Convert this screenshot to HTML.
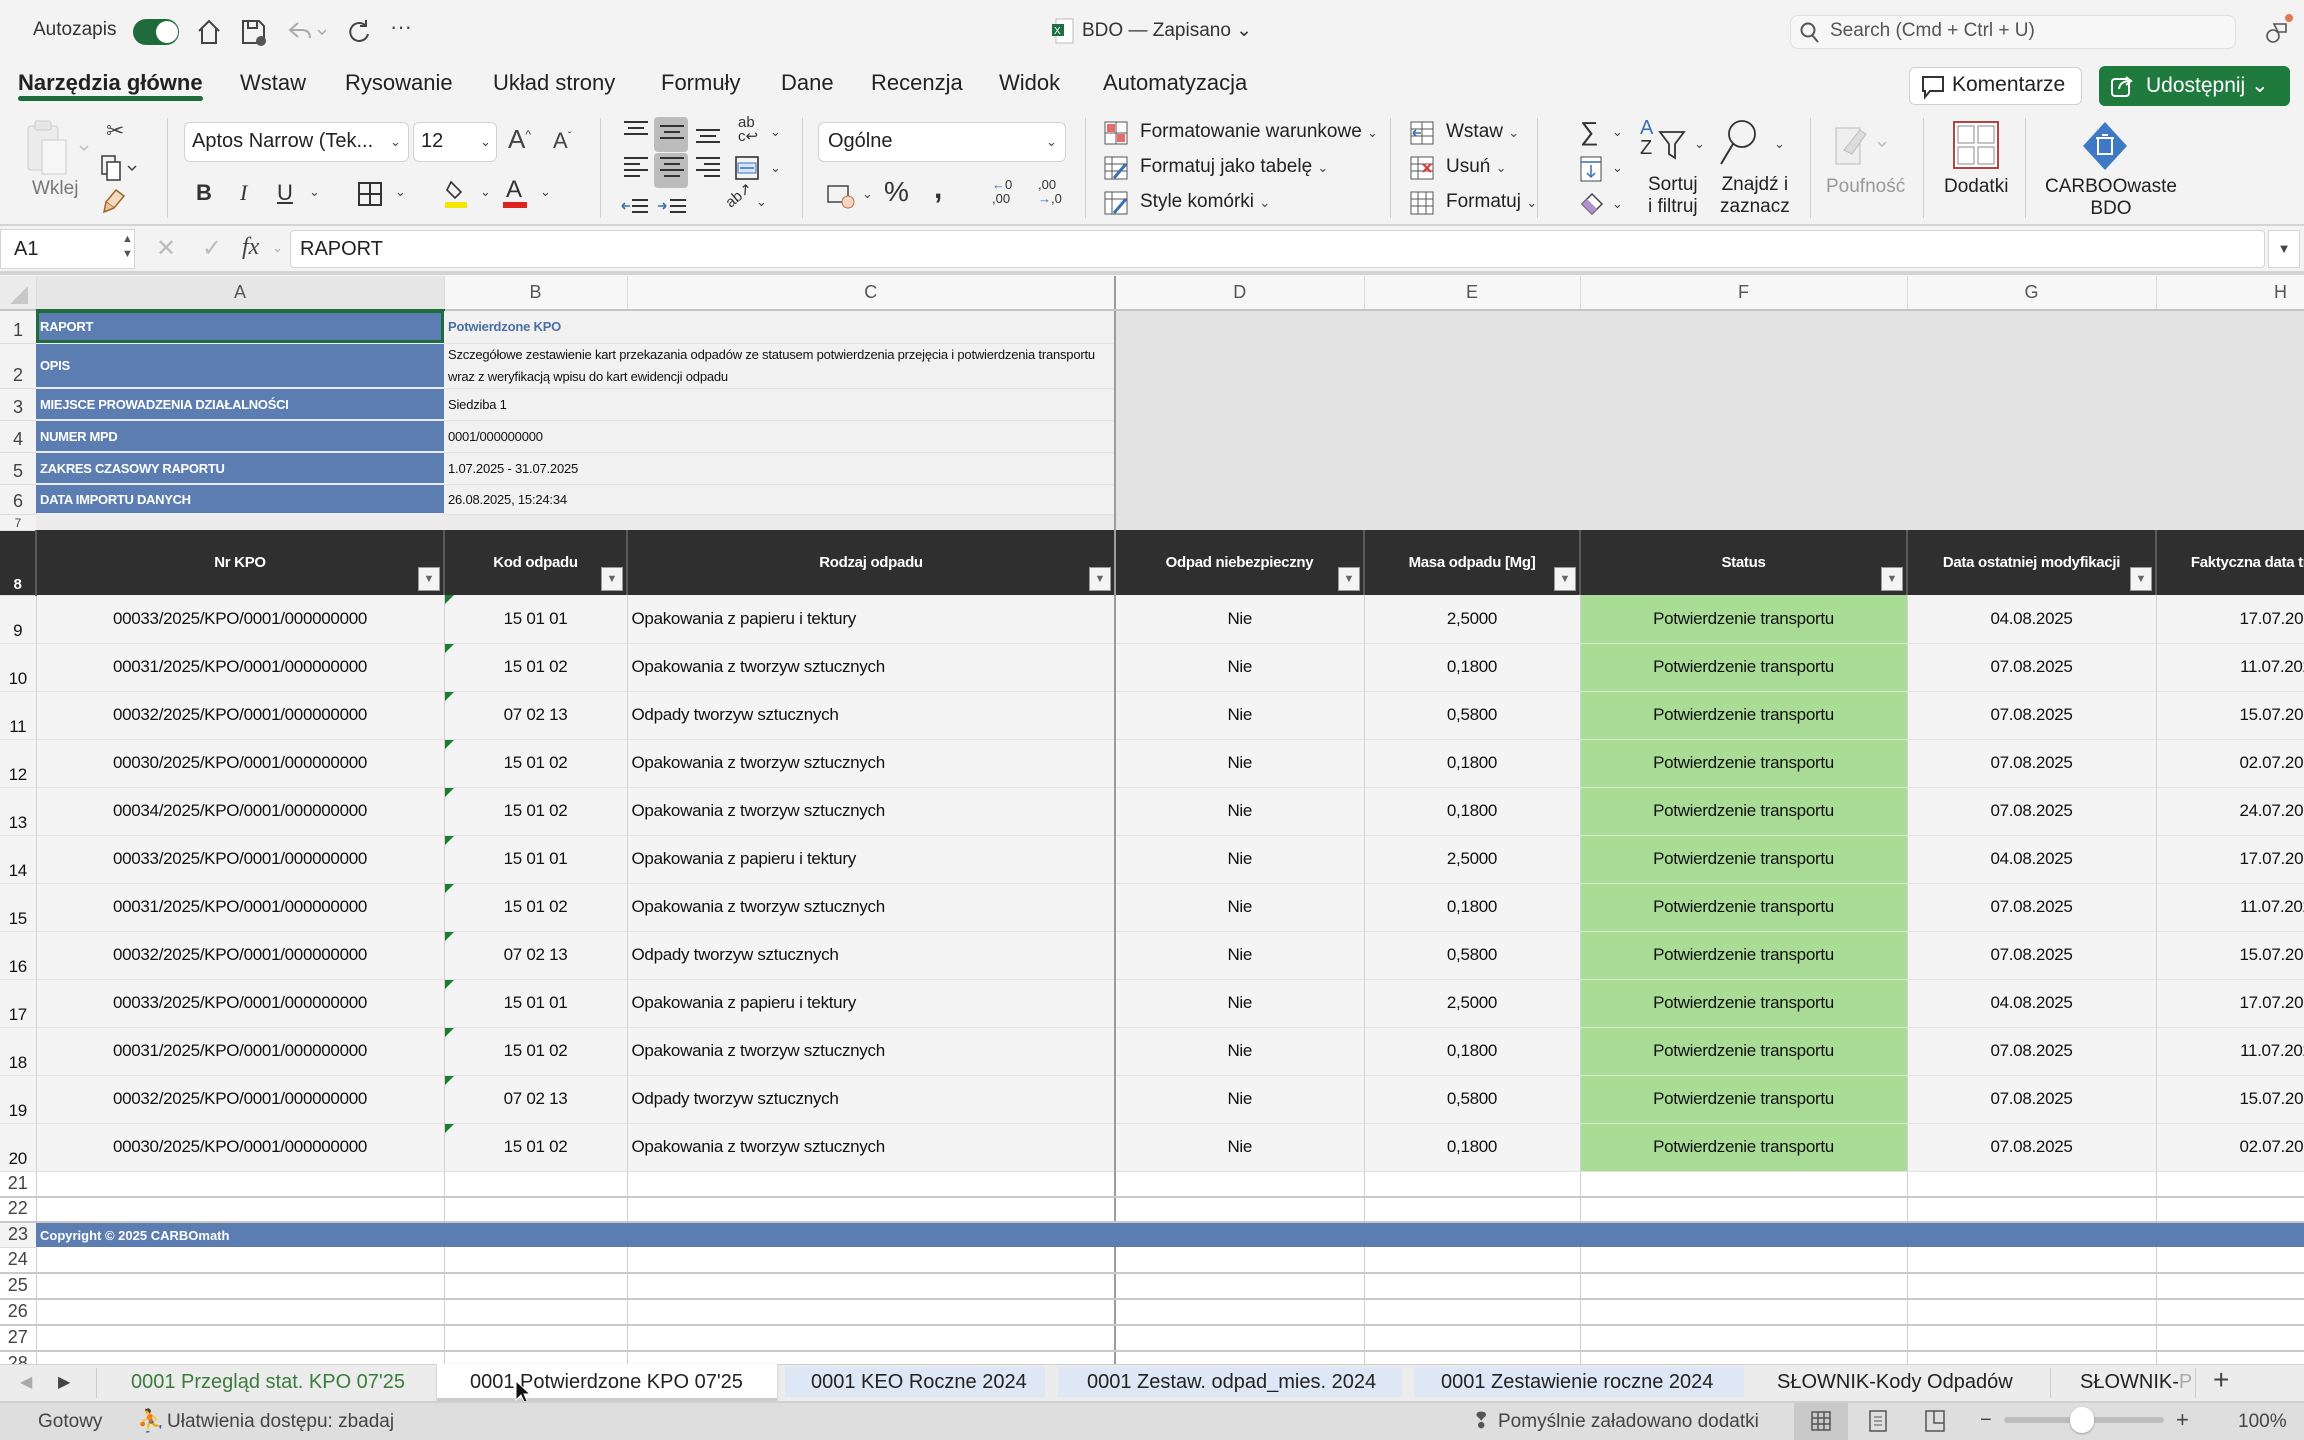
<!DOCTYPE html>
<html><head><meta charset="utf-8">
<style>
*{box-sizing:border-box;margin:0;padding:0}
body{width:2304px;height:1440px;overflow:hidden;background:#f3f3f3;font-family:"Liberation Sans",sans-serif;color:#222;position:relative}
.a{position:absolute;white-space:nowrap}
.t{font-size:22px;color:#222}
.r{font-size:19px;color:#222}
.sep{position:absolute;width:1px;background:#d0d0d0;top:118px;height:100px}
.chev{font-size:13px;color:#444}
svg{position:absolute}
table{position:absolute;left:0;top:276px;width:2405px;border-collapse:collapse;table-layout:fixed;font-family:"Liberation Sans Narrow","Liberation Sans",sans-serif}
td{overflow:hidden;white-space:nowrap;padding:0 4px;position:relative}
td.rh{background:#f3f3f3;color:#444;font-size:18px;text-align:center;vertical-align:bottom;padding:0 0 2px 0;font-family:"Liberation Sans",sans-serif;border-bottom:1px solid #dedede}
tr.ch td{background:#f7f7f7;color:#555;font-size:18px;text-align:center;font-family:"Liberation Sans",sans-serif;border-right:1px solid #dcdcdc;border-bottom:2px solid #c4c4c4}
td.lb{background:#5b7db1;color:#fff;font-weight:bold;font-size:13px;border-bottom:2px solid #e9eef5;letter-spacing:-0.3px}
td.gv{background:#f1f1f1;font-size:13px;color:#111;border-bottom:1px solid #e2e2e2;letter-spacing:-0.2px}
td.gr{background:#e3e3e3}
tr.h td{background:#2f2f2f;color:#fff;font-weight:bold;font-size:15px;text-align:center;border-right:2px solid #5a5a5a;letter-spacing:-0.3px}
.fb{position:absolute;right:3px;bottom:4px;width:22px;height:24px;background:#f4f4f4;border:1px solid #999;color:#666;font-size:11px;line-height:22px;text-align:center;letter-spacing:0}
tr.d td{background:#f4f4f4;font-size:17px;color:#111;text-align:center;border-bottom:1px solid #e1e1e1;border-right:1px solid #d2d2d2;letter-spacing:-0.3px}
tr.d td.l{text-align:left}
tr.d td.g{background:#a9dc95}
tr.d td.tri::before{content:"";position:absolute;left:0;top:0;border-top:9px solid #1f7a35;border-right:9px solid transparent}
tr.e td{background:#fff;border-right:1px solid #cfcfcf;border-bottom:2px solid #c9c9c9}
.cd{border-right:2px solid #9c9c9c !important}
</style></head><body>

<!-- title bar -->
<div class="a r" style="left:33px;top:19px;color:#333">Autozapis</div>
<div class="a" style="left:133px;top:19px;width:46px;height:26px;border-radius:13px;background:#1f6b3b"></div>
<div class="a" style="left:156px;top:21px;width:22px;height:22px;border-radius:11px;background:#fff"></div>
<svg style="left:196px;top:18px" width="26" height="28" viewBox="0 0 26 28"><path d="M3 13 L13 3 L23 13 M6 10 V25 H20 V10" fill="none" stroke="#444" stroke-width="2"/></svg>
<svg style="left:240px;top:18px" width="28" height="30" viewBox="0 0 28 30"><path d="M3 3 H19 L24 8 V25 H3 Z M8 3 V10 H17 V3" fill="none" stroke="#444" stroke-width="2"/><circle cx="21" cy="23" r="5" fill="#555"/></svg>
<svg style="left:286px;top:20px" width="40" height="26" viewBox="0 0 40 26"><path d="M12 3 L4 10 L12 17 M4 10 H16 Q24 10 24 18" fill="none" stroke="#aaa" stroke-width="2"/><path d="M32 10 L36 14 L40 10" fill="none" stroke="#aaa" stroke-width="1.5"/></svg>
<svg style="left:346px;top:18px" width="26" height="28" viewBox="0 0 26 28"><path d="M20 8 A9 9 0 1 0 22 16 M20 2 V8 H14" fill="none" stroke="#444" stroke-width="2"/></svg>
<div class="a" style="left:390px;top:14px;font-size:22px;color:#444">···</div>
<svg style="left:1052px;top:18px" width="22" height="26" viewBox="0 0 22 26"><rect x="4" y="1" width="17" height="24" fill="#fff" stroke="#bbb"/><rect x="0" y="6" width="12" height="12" fill="#1e7145"/><text x="2" y="16" font-size="10" fill="#fff" font-family="Liberation Sans">X</text></svg>
<div class="a r" style="left:1082px;top:19px;color:#333">BDO — Zapisano ⌄</div>
<div class="a" style="left:1790px;top:15px;width:446px;height:34px;border:1px solid #e0e0e0;border-radius:8px;background:#f7f7f7"></div>
<svg style="left:1800px;top:22px" width="20" height="22" viewBox="0 0 20 22"><circle cx="8" cy="8" r="6.5" fill="none" stroke="#555" stroke-width="2"/><path d="M12 13 L18 20" stroke="#555" stroke-width="2"/></svg>
<div class="a r" style="left:1830px;top:20px;color:#555">Search (Cmd + Ctrl + U)</div>
<svg style="left:2260px;top:14px" width="34" height="34" viewBox="0 0 34 34"><circle cx="13" cy="22" r="6" fill="none" stroke="#555" stroke-width="1.6"/><path d="M14 10 h12 v8 h-8z" fill="none" stroke="#555" stroke-width="1.6"/><circle cx="29" cy="4" r="4" fill="#e07a50"/></svg>

<!-- tabs -->
<div class="a t" style="left:18px;top:70px;font-weight:bold">Narzędzia główne</div>
<div class="a" style="left:18px;top:96px;width:185px;height:5px;border-radius:3px;background:#1f6b3b"></div>
<div class="a t" style="left:240px;top:70px">Wstaw</div>
<div class="a t" style="left:345px;top:70px">Rysowanie</div>
<div class="a t" style="left:493px;top:70px">Układ strony</div>
<div class="a t" style="left:661px;top:70px">Formuły</div>
<div class="a t" style="left:781px;top:70px">Dane</div>
<div class="a t" style="left:871px;top:70px">Recenzja</div>
<div class="a t" style="left:999px;top:70px">Widok</div>
<div class="a t" style="left:1103px;top:70px">Automatyzacja</div>
<div class="a" style="left:1909px;top:67px;width:173px;height:38px;border:1px solid #d0d0d0;border-radius:6px;background:#fff"></div>
<svg style="left:1920px;top:74px" width="26" height="26" viewBox="0 0 26 26"><path d="M3 3 H23 V17 H10 L5 23 V17 H3 Z" fill="none" stroke="#333" stroke-width="2"/></svg>
<div class="a t" style="left:1952px;top:73px;font-size:21px">Komentarze</div>
<div class="a" style="left:2099px;top:66px;width:191px;height:40px;border-radius:6px;background:#1f7a3e"></div>
<svg style="left:2110px;top:73px" width="26" height="26" viewBox="0 0 26 26"><rect x="2" y="6" width="17" height="17" rx="3" fill="none" stroke="#fff" stroke-width="2"/><path d="M9 16 Q10 8 20 8 M16 4 L21 8 L16 12" fill="none" stroke="#fff" stroke-width="2"/></svg>
<div class="a t" style="left:2146px;top:73px;color:#fff;font-size:21px">Udostępnij ⌄</div>

<!-- ribbon -->
<svg style="left:22px;top:118px" width="70" height="60" viewBox="0 0 70 60"><rect x="6" y="8" width="30" height="44" rx="3" fill="#ececec" stroke="#ccc"/><rect x="13" y="3" width="16" height="9" rx="2" fill="#e6e6e6" stroke="#ccc"/><rect x="20" y="22" width="24" height="34" fill="#f6f6f6" stroke="#ccc"/><path d="M58 28 l4 4 l4 -4" fill="none" stroke="#bbb" stroke-width="1.5"/></svg>
<div class="a r" style="left:32px;top:178px;color:#777">Wklej</div>
<div class="a" style="left:106px;top:118px;font-size:22px;color:#444">✂</div>
<svg style="left:100px;top:154px" width="40" height="30" viewBox="0 0 40 30"><rect x="2" y="2" width="13" height="18" fill="none" stroke="#444" stroke-width="1.6"/><rect x="7" y="8" width="13" height="18" fill="#fff" stroke="#444" stroke-width="1.6"/><path d="M28 12 l4 4 l4 -4" fill="none" stroke="#444" stroke-width="1.5"/></svg>
<svg style="left:102px;top:188px" width="24" height="26" viewBox="0 0 24 26"><path d="M14 2 L22 8 L12 20 L4 14 Z" fill="#f2dcc0" stroke="#a0662a" stroke-width="1.5"/><path d="M4 14 L2 24 L12 20" fill="#e8c89a" stroke="#a0662a" stroke-width="1.5"/></svg>
<div class="sep" style="left:167px"></div>
<div class="a" style="left:184px;top:122px;width:225px;height:40px;border:1px solid #d2d2d2;border-radius:6px;background:#fff"></div>
<div class="a r" style="left:192px;top:130px;font-size:20px">Aptos Narrow (Tek...</div>
<div class="a chev" style="left:390px;top:134px">⌄</div>
<div class="a" style="left:413px;top:122px;width:84px;height:40px;border:1px solid #d2d2d2;border-radius:6px;background:#fff"></div>
<div class="a r" style="left:421px;top:130px;font-size:20px">12</div>
<div class="a chev" style="left:480px;top:134px">⌄</div>
<div class="a" style="left:508px;top:124px;font-size:26px;color:#444">A<sup style="font-size:12px">^</sup></div>
<div class="a" style="left:553px;top:128px;font-size:22px;color:#444">A<sup style="font-size:11px">ˇ</sup></div>
<div class="a" style="left:196px;top:180px;font-size:22px;font-weight:bold;color:#333">B</div>
<div class="a" style="left:240px;top:180px;font-size:22px;font-style:italic;color:#333;font-family:'Liberation Serif',serif">I</div>
<div class="a" style="left:277px;top:180px;font-size:22px;text-decoration:underline;color:#333">U</div>
<div class="a chev" style="left:309px;top:184px">⌄</div>
<svg style="left:357px;top:181px" width="26" height="26" viewBox="0 0 26 26"><rect x="2" y="2" width="22" height="22" fill="none" stroke="#333" stroke-width="2"/><path d="M13 2 V24 M2 13 H24" stroke="#333" stroke-width="2"/></svg>
<div class="a chev" style="left:395px;top:184px">⌄</div>
<svg style="left:443px;top:178px" width="26" height="32" viewBox="0 0 26 32"><path d="M8 4 L18 14 L12 20 L4 12 Z" fill="none" stroke="#333" stroke-width="1.6"/><rect x="2" y="24" width="22" height="6" fill="#f5e600"/></svg>
<div class="a chev" style="left:480px;top:184px">⌄</div>
<div class="a" style="left:506px;top:176px;font-size:24px;color:#333">A</div>
<div class="a" style="left:503px;top:202px;width:24px;height:6px;background:#d22"></div>
<div class="a chev" style="left:540px;top:184px">⌄</div>
<div class="sep" style="left:600px"></div>
<div class="a" style="left:654px;top:117px;width:34px;height:35px;border-radius:4px;background:#bcbcbc"></div>
<div class="a" style="left:654px;top:153px;width:34px;height:35px;border-radius:4px;background:#bcbcbc"></div>
<svg style="left:620px;top:118px" width="100" height="100" viewBox="0 0 100 100">
<g stroke="#333" stroke-width="2"><path d="M4 4h24M8 10h16M4 16h24"/><path d="M40 8h24M44 14h16M40 20h24"/><path d="M76 12h24M80 18h16M76 24h24"/>
<path d="M4 40h24M4 46h16M4 52h24M4 58h16"/><path d="M40 40h24M44 46h16M40 52h24M44 58h16"/><path d="M76 40h24M84 46h16M76 52h24M84 58h16"/>
<path d="M12 82h16M12 88h16M12 94h16"/><path d="M50 82h16M50 88h16M50 94h16"/></g>
<path d="M2 88h8M2 88l3 -3M2 88l3 3" stroke="#3a6fb0" stroke-width="1.6" fill="none"/><path d="M38 88h8M46 88l-3 -3M46 88l-3 3" stroke="#3a6fb0" stroke-width="1.6" fill="none"/></svg>
<div class="a" style="left:738px;top:116px;font-size:15px;color:#333;line-height:14px">ab<br>c↩</div>
<div class="a chev" style="left:770px;top:124px">⌄</div>
<svg style="left:734px;top:155px" width="26" height="26" viewBox="0 0 26 26"><rect x="2" y="2" width="22" height="22" fill="none" stroke="#333" stroke-width="1.6"/><rect x="4" y="8" width="18" height="10" fill="#d6e6f7" stroke="#3a6fb0"/><path d="M6 13h14" stroke="#3a6fb0" stroke-width="1.5"/></svg>
<div class="a chev" style="left:770px;top:160px">⌄</div>
<div class="a" style="left:724px;top:186px;font-size:15px;color:#333;transform:rotate(-40deg)">ab↗</div>
<div class="a chev" style="left:756px;top:194px">⌄</div>
<div class="sep" style="left:802px"></div>
<div class="a" style="left:818px;top:122px;width:248px;height:40px;border:1px solid #d2d2d2;border-radius:6px;background:#fff"></div>
<div class="a r" style="left:828px;top:130px;font-size:20px">Ogólne</div>
<div class="a chev" style="left:1046px;top:134px">⌄</div>
<svg style="left:826px;top:182px" width="30" height="28" viewBox="0 0 30 28"><rect x="2" y="4" width="20" height="16" fill="none" stroke="#444" stroke-width="1.5"/><ellipse cx="22" cy="20" rx="6" ry="6" fill="#f3d6c4" stroke="#c76b3a"/></svg>
<div class="a chev" style="left:862px;top:186px">⌄</div>
<div class="a" style="left:884px;top:176px;font-size:28px;color:#333">%</div>
<div class="a" style="left:934px;top:172px;font-size:30px;font-weight:bold;color:#333">,</div>
<div class="a" style="left:992px;top:178px;font-size:13px;line-height:14px;color:#333"><span style="color:#3a6fb0">←</span>0<br>,00</div>
<div class="a" style="left:1038px;top:178px;font-size:13px;line-height:14px;color:#333">,00<br><span style="color:#3a6fb0">→</span>,0</div>
<div class="sep" style="left:1085px"></div>
<svg style="left:1104px;top:121px" width="24" height="24" viewBox="0 0 24 24"><rect x="1" y="1" width="22" height="22" fill="#fff" stroke="#555"/><rect x="3" y="3" width="8" height="8" fill="#e46c6c"/><rect x="13" y="13" width="8" height="8" fill="#e46c6c"/><path d="M1 12h22M12 1v22" stroke="#555"/></svg>
<div class="a r" style="left:1140px;top:121px">Formatowanie warunkowe <span class="chev">⌄</span></div>
<svg style="left:1104px;top:156px" width="24" height="24" viewBox="0 0 24 24"><rect x="1" y="1" width="22" height="22" fill="#fff" stroke="#555"/><path d="M1 8h22M1 15h22M8 1v22" stroke="#555"/><path d="M10 22 L22 8" stroke="#3a6fb0" stroke-width="3"/></svg>
<div class="a r" style="left:1140px;top:156px">Formatuj jako tabelę <span class="chev">⌄</span></div>
<svg style="left:1104px;top:191px" width="24" height="24" viewBox="0 0 24 24"><rect x="1" y="1" width="22" height="22" fill="#fff" stroke="#555"/><path d="M1 8h22M8 1v22" stroke="#555"/><path d="M10 22 L22 8" stroke="#3a6fb0" stroke-width="3"/></svg>
<div class="a r" style="left:1140px;top:191px">Style komórki <span class="chev">⌄</span></div>
<div class="sep" style="left:1390px"></div>
<svg style="left:1410px;top:121px" width="24" height="24" viewBox="0 0 24 24"><rect x="1" y="1" width="22" height="22" fill="#fff" stroke="#555"/><path d="M1 8h22M1 15h22M12 1v22" stroke="#555"/><path d="M3 12h8M3 12l3-3M3 12l3 3" stroke="#3a6fb0" stroke-width="1.6"/></svg>
<div class="a r" style="left:1446px;top:121px">Wstaw <span class="chev">⌄</span></div>
<svg style="left:1410px;top:156px" width="24" height="24" viewBox="0 0 24 24"><rect x="1" y="1" width="22" height="22" fill="#fff" stroke="#555"/><path d="M1 8h22M1 15h22M8 1v22" stroke="#555"/><path d="M13 8l8 8M21 8l-8 8" stroke="#d33" stroke-width="2"/></svg>
<div class="a r" style="left:1446px;top:156px">Usuń <span class="chev">⌄</span></div>
<svg style="left:1410px;top:191px" width="24" height="24" viewBox="0 0 24 24"><rect x="1" y="1" width="22" height="22" fill="#fff" stroke="#555"/><path d="M1 8h22M1 15h22M8 1v22M16 1v22" stroke="#555"/></svg>
<div class="a r" style="left:1446px;top:191px">Formatuj <span class="chev">⌄</span></div>
<div class="sep" style="left:1537px"></div>
<div class="a" style="left:1580px;top:116px;font-size:26px;color:#333">∑</div>
<div class="a chev" style="left:1612px;top:124px">⌄</div>
<svg style="left:1580px;top:156px" width="22" height="26" viewBox="0 0 22 26"><rect x="1" y="1" width="20" height="24" fill="#fff" stroke="#444"/><path d="M1 6h20M11 9v12M7 17l4 4l4-4" stroke="#3a6fb0" stroke-width="1.5" fill="none"/></svg>
<div class="a chev" style="left:1612px;top:160px">⌄</div>
<svg style="left:1580px;top:192px" width="24" height="24" viewBox="0 0 24 24"><path d="M12 2 L22 12 L12 22 L2 12 Z" fill="#fff" stroke="#444" stroke-width="1.5"/><path d="M2 12 L7 7 L17 17 L12 22 Z" fill="#b48fd0"/></svg>
<div class="a chev" style="left:1612px;top:196px">⌄</div>
<div class="a" style="left:1640px;top:118px;font-size:20px;line-height:20px;color:#3a6fb0">A<br><span style="color:#333">Z</span></div>
<svg style="left:1658px;top:130px" width="28" height="30" viewBox="0 0 28 30"><path d="M2 2 H26 L17 14 V28 L11 24 V14 Z" fill="none" stroke="#333" stroke-width="1.8"/></svg>
<div class="a chev" style="left:1694px;top:136px">⌄</div>
<div class="a r" style="left:1648px;top:174px;line-height:22px;text-align:center">Sortuj<br>i filtruj</div>
<svg style="left:1718px;top:118px" width="40" height="50" viewBox="0 0 40 50"><circle cx="24" cy="16" r="13" fill="none" stroke="#333" stroke-width="1.8"/><path d="M15 26 L3 46" stroke="#333" stroke-width="2"/></svg>
<div class="a chev" style="left:1774px;top:136px">⌄</div>
<div class="a r" style="left:1720px;top:174px;line-height:22px;text-align:center">Znajdź i<br>zaznacz</div>
<div class="sep" style="left:1810px"></div>
<svg style="left:1834px;top:120px" width="60" height="50" viewBox="0 0 60 50"><rect x="2" y="8" width="24" height="36" fill="#eee" stroke="#bbb"/><path d="M10 30 L26 10 L32 14 L18 34 Z" fill="#ddd" stroke="#bbb"/><path d="M44 22l4 4l4-4" fill="none" stroke="#bbb" stroke-width="1.5"/></svg>
<div class="a r" style="left:1826px;top:176px;color:#999">Poufność</div>
<div class="sep" style="left:1923px"></div>
<svg style="left:1952px;top:120px" width="48" height="50" viewBox="0 0 48 50"><rect x="2" y="2" width="44" height="46" fill="#fff" stroke="#a33" stroke-width="1.8"/><rect x="6" y="6" width="16" height="17" fill="none" stroke="#888"/><rect x="26" y="6" width="16" height="17" fill="none" stroke="#888"/><rect x="6" y="27" width="16" height="17" fill="none" stroke="#888"/><rect x="26" y="27" width="16" height="17" fill="none" stroke="#888"/></svg>
<div class="a r" style="left:1944px;top:176px">Dodatki</div>
<div class="sep" style="left:2025px"></div>
<svg style="left:2080px;top:120px" width="50" height="52" viewBox="0 0 50 52"><path d="M25 2 L47 26 L25 50 L3 26 Z" fill="#3f78c4"/><rect x="18" y="18" width="14" height="16" fill="none" stroke="#fff" stroke-width="2"/><path d="M16 18h18M22 15h6" stroke="#fff" stroke-width="2"/></svg>
<div class="a r" style="left:2045px;top:176px;line-height:22px;text-align:center">CARBOOwaste<br>BDO</div>

<!-- formula bar -->
<div class="a" style="left:0;top:224px;width:2304px;height:2px;background:#d4d4d4"></div>
<div class="a" style="left:0;top:229px;width:135px;height:40px;background:#fff;border:1px solid #d4d4d4"></div>
<div class="a r" style="left:14px;top:238px;font-size:20px">A1</div>
<div class="a" style="left:122px;top:232px;font-size:11px;line-height:15px;color:#555">▲<br>▼</div>
<div class="a" style="left:156px;top:234px;font-size:24px;color:#bbb">✕</div>
<div class="a" style="left:202px;top:234px;font-size:24px;color:#bbb">✓</div>
<div class="a" style="left:242px;top:234px;font-size:24px;font-style:italic;color:#444;font-family:'Liberation Serif',serif">fx</div>
<div class="a chev" style="left:272px;top:240px;color:#aaa">⌄</div>
<div class="a" style="left:290px;top:230px;width:1975px;height:38px;background:#fff;border:1px solid #d4d4d4;border-radius:4px"></div>
<div class="a r" style="left:300px;top:238px;font-size:20px">RAPORT</div>
<div class="a" style="left:2268px;top:230px;width:32px;height:38px;background:#fff;border:1px solid #d4d4d4;font-size:13px;text-align:center;line-height:36px;color:#444">▼</div>
<div class="a" style="left:0;top:271px;width:2304px;height:4px;background:#d4d4d4"></div>

<table>
<colgroup><col style="width:36px"><col style="width:408px"><col style="width:183px"><col style="width:488px"><col style="width:249px"><col style="width:216px"><col style="width:327px"><col style="width:249px"><col style="width:249px"></colgroup>
<tr class="ch" style="height:34px"><td style="background:#ececec;padding:0"><svg style="left:8px;top:8px" width="22" height="22"><path d="M20 2 V20 H2 Z" fill="#c8c8c8"/></svg></td><td style="background:#e6e6e6;border-bottom:3px solid #1f6b3b">A</td><td>B</td><td class="cd">C</td><td>D</td><td>E</td><td>F</td><td>G</td><td>H</td></tr>
<tr style="height:33px"><td class="rh">1</td><td class="lb" style="outline:3px solid #1f6b3b;outline-offset:-3px">RAPORT</td><td class="gv" colspan="2" style="color:#4a6fa5;font-weight:bold;border-right:2px solid #9c9c9c">Potwierdzone KPO</td><td class="gr" colspan="5" rowspan="7"></td></tr>
<tr style="height:45px"><td class="rh">2</td><td class="lb">OPIS</td><td class="gv" colspan="2" style="white-space:normal;line-height:22px;border-right:2px solid #9c9c9c">Szczegółowe zestawienie kart przekazania odpadów ze statusem potwierdzenia przejęcia i potwierdzenia transportu wraz z weryfikacją wpisu do kart ewidencji odpadu</td></tr>
<tr style="height:32px"><td class="rh">3</td><td class="lb">MIEJSCE PROWADZENIA DZIAŁALNOŚCI</td><td class="gv" colspan="2" style="border-right:2px solid #9c9c9c">Siedziba 1</td></tr>
<tr style="height:32px"><td class="rh">4</td><td class="lb">NUMER MPD</td><td class="gv" colspan="2" style="border-right:2px solid #9c9c9c">0001/000000000</td></tr>
<tr style="height:32px"><td class="rh">5</td><td class="lb">ZAKRES CZASOWY RAPORTU</td><td class="gv" colspan="2" style="border-right:2px solid #9c9c9c">1.07.2025 - 31.07.2025</td></tr>
<tr style="height:30px"><td class="rh">6</td><td class="lb">DATA IMPORTU DANYCH</td><td class="gv" colspan="2" style="border-right:2px solid #9c9c9c">26.08.2025, 15:24:34</td></tr>
<tr style="height:16px"><td class="rh" style="font-size:12px;line-height:10px">7</td><td colspan="3" style="background:#ebebeb;border-right:2px solid #9c9c9c"></td></tr>
<tr class="h" style="height:65px"><td class="rh">8</td><td>Nr KPO<span class="fb">▼</span></td><td>Kod odpadu<span class="fb">▼</span></td><td class="cd">Rodzaj odpadu<span class="fb">▼</span></td><td>Odpad niebezpieczny<span class="fb">▼</span></td><td>Masa odpadu [Mg]<span class="fb">▼</span></td><td>Status<span class="fb">▼</span></td><td>Data ostatniej modyfikacji<span class="fb">▼</span></td><td>Faktyczna data transportu</td></tr>
<tr class="d" style="height:48px"><td class="rh">9</td><td>00033/2025/KPO/0001/000000000</td><td class="tri">15 01 01</td><td class="l cd">Opakowania z papieru i tektury</td><td>Nie</td><td>2,5000</td><td class="g">Potwierdzenie transportu</td><td>04.08.2025</td><td>17.07.2025</td></tr>
<tr class="d" style="height:48px"><td class="rh">10</td><td>00031/2025/KPO/0001/000000000</td><td class="tri">15 01 02</td><td class="l cd">Opakowania z tworzyw sztucznych</td><td>Nie</td><td>0,1800</td><td class="g">Potwierdzenie transportu</td><td>07.08.2025</td><td>11.07.2025</td></tr>
<tr class="d" style="height:48px"><td class="rh">11</td><td>00032/2025/KPO/0001/000000000</td><td class="tri">07 02 13</td><td class="l cd">Odpady tworzyw sztucznych</td><td>Nie</td><td>0,5800</td><td class="g">Potwierdzenie transportu</td><td>07.08.2025</td><td>15.07.2025</td></tr>
<tr class="d" style="height:48px"><td class="rh">12</td><td>00030/2025/KPO/0001/000000000</td><td class="tri">15 01 02</td><td class="l cd">Opakowania z tworzyw sztucznych</td><td>Nie</td><td>0,1800</td><td class="g">Potwierdzenie transportu</td><td>07.08.2025</td><td>02.07.2025</td></tr>
<tr class="d" style="height:48px"><td class="rh">13</td><td>00034/2025/KPO/0001/000000000</td><td class="tri">15 01 02</td><td class="l cd">Opakowania z tworzyw sztucznych</td><td>Nie</td><td>0,1800</td><td class="g">Potwierdzenie transportu</td><td>07.08.2025</td><td>24.07.2025</td></tr>
<tr class="d" style="height:48px"><td class="rh">14</td><td>00033/2025/KPO/0001/000000000</td><td class="tri">15 01 01</td><td class="l cd">Opakowania z papieru i tektury</td><td>Nie</td><td>2,5000</td><td class="g">Potwierdzenie transportu</td><td>04.08.2025</td><td>17.07.2025</td></tr>
<tr class="d" style="height:48px"><td class="rh">15</td><td>00031/2025/KPO/0001/000000000</td><td class="tri">15 01 02</td><td class="l cd">Opakowania z tworzyw sztucznych</td><td>Nie</td><td>0,1800</td><td class="g">Potwierdzenie transportu</td><td>07.08.2025</td><td>11.07.2025</td></tr>
<tr class="d" style="height:48px"><td class="rh">16</td><td>00032/2025/KPO/0001/000000000</td><td class="tri">07 02 13</td><td class="l cd">Odpady tworzyw sztucznych</td><td>Nie</td><td>0,5800</td><td class="g">Potwierdzenie transportu</td><td>07.08.2025</td><td>15.07.2025</td></tr>
<tr class="d" style="height:48px"><td class="rh">17</td><td>00033/2025/KPO/0001/000000000</td><td class="tri">15 01 01</td><td class="l cd">Opakowania z papieru i tektury</td><td>Nie</td><td>2,5000</td><td class="g">Potwierdzenie transportu</td><td>04.08.2025</td><td>17.07.2025</td></tr>
<tr class="d" style="height:48px"><td class="rh">18</td><td>00031/2025/KPO/0001/000000000</td><td class="tri">15 01 02</td><td class="l cd">Opakowania z tworzyw sztucznych</td><td>Nie</td><td>0,1800</td><td class="g">Potwierdzenie transportu</td><td>07.08.2025</td><td>11.07.2025</td></tr>
<tr class="d" style="height:48px"><td class="rh">19</td><td>00032/2025/KPO/0001/000000000</td><td class="tri">07 02 13</td><td class="l cd">Odpady tworzyw sztucznych</td><td>Nie</td><td>0,5800</td><td class="g">Potwierdzenie transportu</td><td>07.08.2025</td><td>15.07.2025</td></tr>
<tr class="d" style="height:48px"><td class="rh">20</td><td>00030/2025/KPO/0001/000000000</td><td class="tri">15 01 02</td><td class="l cd">Opakowania z tworzyw sztucznych</td><td>Nie</td><td>0,1800</td><td class="g">Potwierdzenie transportu</td><td>07.08.2025</td><td>02.07.2025</td></tr>
<tr class="e" style="height:26px"><td class="rh">21</td><td></td><td></td><td class="cd"></td><td></td><td></td><td></td><td></td><td></td></tr>
<tr class="e" style="height:25px"><td class="rh">22</td><td></td><td></td><td class="cd"></td><td></td><td></td><td></td><td></td><td></td></tr>
<tr style="height:25px"><td class="rh">23</td><td colspan="8" style="background:#5b7db1;color:#fff;font-size:13px;font-weight:bold">Copyright © 2025 CARBOmath</td></tr>
<tr class="e" style="height:26px"><td class="rh">24</td><td></td><td></td><td class="cd"></td><td></td><td></td><td></td><td></td><td></td></tr>
<tr class="e" style="height:26px"><td class="rh">25</td><td></td><td></td><td class="cd"></td><td></td><td></td><td></td><td></td><td></td></tr>
<tr class="e" style="height:26px"><td class="rh">26</td><td></td><td></td><td class="cd"></td><td></td><td></td><td></td><td></td><td></td></tr>
<tr class="e" style="height:26px"><td class="rh">27</td><td></td><td></td><td class="cd"></td><td></td><td></td><td></td><td></td><td></td></tr>
<tr class="e" style="height:26px"><td class="rh">28</td><td></td><td></td><td class="cd"></td><td></td><td></td><td></td><td></td><td></td></tr>
</table>

<!-- sheet tabs -->
<div class="a" style="left:0;top:1364px;width:2304px;height:38px;background:#ececec;border-top:1px solid #d0d0d0"></div>
<div class="a" style="left:20px;top:1372px;font-size:16px;color:#aaa">◀</div>
<div class="a" style="left:58px;top:1372px;font-size:16px;color:#444">▶</div>
<div class="a" style="left:96px;top:1368px;width:1px;height:30px;background:#ccc"></div>
<div class="a r" style="left:131px;top:1371px;color:#3a7d3a;font-size:20px">0001 Przegląd stat. KPO 07'25</div>
<div class="a" style="left:437px;top:1364px;width:340px;height:36px;background:#fff;border-bottom:2px solid #ccc;box-shadow:0 1px 2px #bbb"></div>
<div class="a r" style="left:470px;top:1371px;font-size:20px">0001 Potwierdzone KPO 07'25</div>
<div class="a" style="left:785px;top:1367px;width:260px;height:30px;background:#dde7f5"></div>
<div class="a r" style="left:811px;top:1371px;font-size:20px">0001 KEO Roczne 2024</div>
<div class="a" style="left:1058px;top:1367px;width:344px;height:30px;background:#dde7f5"></div>
<div class="a r" style="left:1087px;top:1371px;font-size:20px">0001 Zestaw. odpad_mies. 2024</div>
<div class="a" style="left:1414px;top:1367px;width:330px;height:30px;background:#dde7f5"></div>
<div class="a r" style="left:1441px;top:1371px;font-size:20px">0001 Zestawienie roczne 2024</div>
<div class="a r" style="left:1777px;top:1371px;font-size:20px">SŁOWNIK-Kody Odpadów</div>
<div class="a" style="left:2050px;top:1368px;width:1px;height:30px;background:#ccc"></div>
<div class="a r" style="left:2080px;top:1371px;font-size:20px">SŁOWNIK-<span style="color:#aaa">P</span></div>
<div class="a" style="left:2195px;top:1368px;width:1px;height:30px;background:#ccc"></div>
<div class="a" style="left:2213px;top:1364px;font-size:28px;color:#444">+</div>
<svg style="left:515px;top:1380px" width="16" height="26" viewBox="0 0 16 26"><path d="M1 1 V20 L6 15 L10 24 L13 23 L9 14 H15 Z" fill="#111" stroke="#fff" stroke-width="1"/></svg>

<!-- status bar -->
<div class="a" style="left:0;top:1401px;width:2304px;height:39px;background:#dedede;border-top:2px solid #cfcfcf"></div>
<div class="a r" style="left:38px;top:1411px;color:#444">Gotowy</div>
<div class="a" style="left:137px;top:1408px;font-size:22px;color:#555">⛹</div>
<div class="a r" style="left:167px;top:1411px;color:#444">Ułatwienia dostępu: zbadaj</div>
<div class="a" style="left:1472px;top:1408px;font-size:22px;color:#555">❢</div>
<div class="a r" style="left:1498px;top:1411px;color:#444">Pomyślnie załadowano dodatki</div>
<div class="a" style="left:1794px;top:1403px;width:54px;height:37px;background:#c9c9c9"></div>
<svg style="left:1810px;top:1410px" width="22" height="22" viewBox="0 0 22 22"><path d="M2 2h18v18H2zM2 8h18M2 14h18M8 2v18M14 2v18" fill="none" stroke="#555" stroke-width="1.5"/></svg>
<svg style="left:1868px;top:1409px" width="20" height="24" viewBox="0 0 20 24"><rect x="2" y="2" width="16" height="20" fill="none" stroke="#555" stroke-width="1.5"/><path d="M6 8h8M6 12h8M6 16h8" stroke="#555"/></svg>
<svg style="left:1924px;top:1409px" width="22" height="24" viewBox="0 0 22 24"><path d="M2 2h18v20H2zM10 2v12H20" fill="none" stroke="#555" stroke-width="1.5"/></svg>
<div class="a" style="left:1980px;top:1409px;font-size:20px;color:#444">−</div>
<div class="a" style="left:2004px;top:1417px;width:160px;height:6px;border-radius:3px;background:#bdbdbd"></div>
<div class="a" style="left:2070px;top:1407px;width:24px;height:26px;border-radius:12px;background:#fff;box-shadow:0 1px 2px #999"></div>
<div class="a" style="left:2176px;top:1407px;font-size:22px;color:#444">+</div>
<div class="a r" style="left:2238px;top:1411px;color:#444">100%</div>
</body></html>
